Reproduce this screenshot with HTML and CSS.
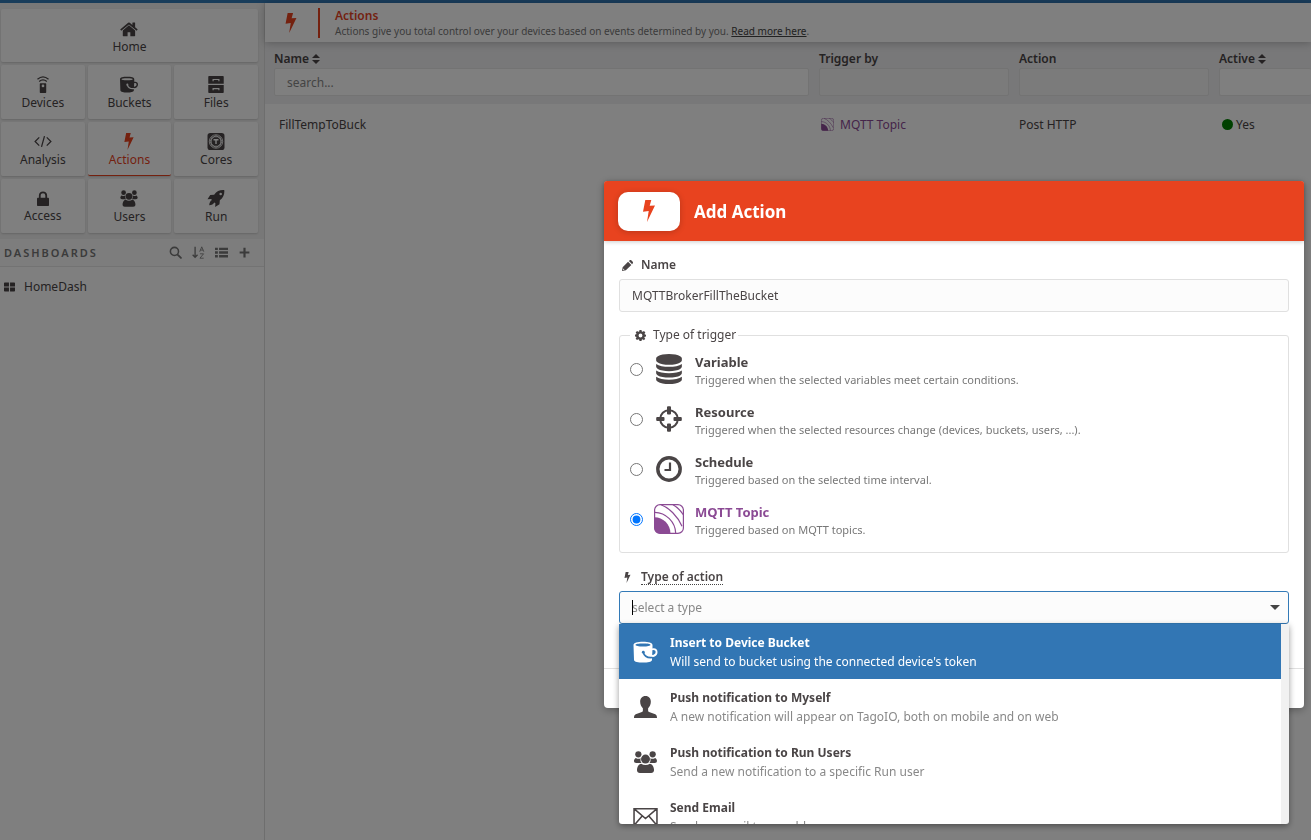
FILE: index.html
```html
<!DOCTYPE html>
<html lang="en">
<head>
<meta charset="utf-8">
<title>Add Action</title>
<link rel="stylesheet" href="styles.css">
</head>
<body>
<svg class="sprite" aria-hidden="true">
  <symbol id="bolt" viewBox="0 0 12 22"><path d="M2.3 0h6L6.7 5.8 12 5.400 4 22 5.700 11 0 11.800z"/></symbol>
  <symbol id="home" viewBox="60 200 1680 1400"><path d="M1472 992v480q0 26-19 45t-45 19h-384v-384H768v384H384q-26 0-45-19t-19-45V992q0-1 .5-3t.5-3l575-474 575 474q1 2 1 6zm223-69l-62 74q-8 9-21 11h-3q-13 0-21-7L896 424 204 1001q-12 8-24 7-13-2-21-11l-62-74q-8-10-7-23.500t11-21.500l719-599q32-26 76-26t76 26l244 204v-195q0-14 9-23t23-9h192q14 0 23 9t9 23v408l219 182q10 8 11 21.500t-7 23.500z"/></symbol>
  <symbol id="device" viewBox="0 0 20 20"><path d="M7 8.500h6a.8.8 0 0 1 .8.8v9.900a.8.8 0 0 1-.8.8H7a.8.8 0 0 1-.8-.8V9.300a.8.8 0 0 1 .8-.8zm3 1.600a1.600 1.600 0 1 0 0 3.200 1.600 1.600 0 0 0 0-3.200z" fill-rule="evenodd"/><path d="M3.500 3.800Q10-1.800 16.500 3.800M5.500 6.500Q10 2.600 14.500 6.500" fill="none" stroke="currentColor" stroke-width="1.500"/></symbol>
  <symbol id="bucket" viewBox="0 0 24 22"><path fill-rule="evenodd" d="M0 4C0 1.600 4 .8 9.500 .8S19 1.600 19 4v3.400c3-.6 5 1 5 3.500 0 3.200-2.400 5-5.400 5l-.1 3c-.5 1.900-4 2.700-9 2.700S1 20.800.5 18.900zM2 3.900c0 .9 3 1.500 7.500 1.500S17 4.800 17 3.900s-3-1.400-7.500-1.400S2 3 2 3.900zM18.900 9.200l-.2 4.700c2 0 3.400-1.200 3.400-2.900 0-1.400-1.300-2.200-3.200-1.800z"/><path class="cut" d="M9.800 11.500c1 3.600 4 5.600 9.200 5" fill="none" stroke-width="1.700"/><circle class="cut-fill" cx="9.800" cy="11.200" r="1.400"/></symbol>
  <symbol id="files" viewBox="0 0 20 22"><path fill-rule="evenodd" d="M1 0h18a1 1 0 0 1 1 1v9H0V1a1 1 0 0 1 1-1zm4.500 3.800v3H7v-1.500h6v1.500h1.500v-3zM0 11.500h20V21a1 1 0 0 1-1 1H1a1 1 0 0 1-1-1zm5.500 4v3H7V17h6v1.500h1.500v-3z"/></symbol>
  <symbol id="code" viewBox="0 0 24 16"><path d="M7 2.500 1.500 8 7 13.500M17 2.500 22.500 8 17 13.500M14 .8 10 15.200" fill="none" stroke="currentColor" stroke-width="1.700"/></symbol>
  <symbol id="core" viewBox="0 0 24 24"><rect width="24" height="24" rx="4"/><g class="cut" fill="none" stroke-width="1.100"><circle cx="12" cy="12" r="9.500"/><rect x="5.300" y="5.300" width="13.400" height="13.400" rx="3.500"/><rect x="5.300" y="5.300" width="13.400" height="13.400" rx="3.500" transform="rotate(45 12 12)"/><path d="M8.500 9.500h7M12 9.500v6" stroke-width="2"/></g></symbol>
  <symbol id="lock" viewBox="0 0 16 20"><path d="M1 9h14a1 1 0 0 1 1 1v9a1 1 0 0 1-1 1H1a1 1 0 0 1-1-1v-9a1 1 0 0 1 1-1z"/><path d="M3.700 9.500V6a4.300 4.300 0 0 1 8.600 0v3.500" fill="none" stroke="currentColor" stroke-width="2.400"/></symbol>
  <symbol id="users" viewBox="0 0 26 24"><circle cx="5.200" cy="3.600" r="3.400"/><circle cx="20.800" cy="3.600" r="3.400"/><path d="M2.500 7.500c1.800 1.200 3.800 1.200 5.300.3-.8 2.600 0 4.200 1 5.200H3C-.5 13 0 8.500 2.500 7.500zM23.500 7.500c-1.800 1.200-3.800 1.200-5.300.3.800 2.600 0 4.200-1 5.200H23c3.500 0 3-4.500.5-5.500z"/><circle cx="13" cy="8.800" r="4.900"/><path d="M8.200 13.800c3 2.100 6.600 2.100 9.600 0 3 .6 4.500 3.600 4.500 7 0 2.200-1.300 3.200-3.200 3.200H6.900c-1.900 0-3.200-1-3.200-3.200 0-3.400 1.500-6.400 4.500-7z"/></symbol>
  <symbol id="rocket" viewBox="0 0 20 20"><path fill-rule="evenodd" d="M19.800.2C14.500-.2 11 1.500 7.800 5.500L3.200 5.900 0 11l4.300-.4.900 1.300c-1.800.8-3 3.300-3.200 6.100 2.800-.2 5.200-1.300 6-3.200l1.300.9L9 20l5.100-3.200.4-4.600c4-3.200 5.600-6.700 5.300-12zM15.500 3.200a1.500 1.500 0 1 1 0 3 1.500 1.500 0 0 1 0-3z"/></symbol>
  <symbol id="search" viewBox="0 0 16 16"><circle cx="6.700" cy="6.700" r="5" fill="none" stroke="currentColor" stroke-width="1.900"/><path d="m10.500 10.500 4.200 4.200" stroke="currentColor" stroke-width="2.200" stroke-linecap="round"/></symbol>
  <symbol id="sort-az" viewBox="0 0 16 16"><path d="M3.800 1v13M.8 10.700l3 3.300 3-3.300" fill="none" stroke="currentColor" stroke-width="1.600"/><path d="m9.500 7 2.500-6 2.500 6M10.300 5h3.400M9.800 9.600h4.400l-4.400 5.400h4.600" fill="none" stroke="currentColor" stroke-width="1"/></symbol>
  <symbol id="list" viewBox="0 0 16 14"><path d="M0 1h3.500v3H0zM5 1h11v3H5zM0 5.500h3.500v3H0zM5 5.500h11v3H5zM0 10h3.500v3H0zM5 10h11v3H5z"/></symbol>
  <symbol id="plus" viewBox="0 0 12 12"><path d="M5 1.500h2V5h3.500v2H7v3.500H5V7H1.500V5H5z"/></symbol>
  <symbol id="tiles" viewBox="0 0 12 10"><path d="M.8 0h4.600v4.500H0V.8A.8.8 0 0 1 .8 0zM6.600 0h4.600a.8.8 0 0 1 .8.800v3.700H6.600zM0 5.500h5.400V10H.8a.8.8 0 0 1-.8-.8zM6.600 5.500H12v3.700a.8.8 0 0 1-.8.800H6.600z"/></symbol>
  <symbol id="sort" viewBox="0 0 8 10"><path d="M4 0 8 4H0zM4 10 8 6H0z"/></symbol>
  <symbol id="pencil" viewBox="0 0 12 12"><path fill-rule="evenodd" d="M0 12 .7 7.800 6.600 1.800l3.600 3.600-6 5.900zM7.500 1 8.500 .2c.5-.4 1.200-.3 1.600.1l1.600 1.600c.4.400.5 1.100.1 1.600l-.8 1zM1.500 9.300l-.3 1.500 1.500-.3z"/></symbol>
  <symbol id="gear" viewBox="0 0 12 12"><path fill-rule="evenodd" d="M4.900 0h2.200l.3 1.600 1 .4L9.800 1.100l1.500 1.500-.9 1.400.4 1 1.200.2v1.900l-1.400.3-.4 1 1 1.200-1.500 1.500-1.300-.9-1 .4L7.100 12H4.900l-.3-1.500-1-.4-1.400.9L.7 9.500l.9-1.200-.4-1L0 7V5l1.200-.2.4-1L.7 2.600l1.500-1.500 1.400.900 1-.4zM6 3.900a2.100 2.100 0 1 0 0 4.200 2.100 2.100 0 0 0 0-4.200z"/></symbol>
  <symbol id="database" viewBox="128 0 1536 1792"><path d="M896 768q237 0 443-43t325-127v170q0 69-103 128t-280 93.500-385 34.500-385-34.500-280-93.500-103-128v-170q119 84 325 127t443 43zm0 768q237 0 443-43t325-127v170q0 69-103 128t-280 93.500-385 34.500-385-34.500-280-93.500-103-128v-170q119 84 325 127t443 43zm0-384q237 0 443-43t325-127v170q0 69-103 128t-280 93.500-385 34.500-385-34.500-280-93.500-103-128v-170q119 84 325 127t443 43zm0-1152q208 0 385 34.500t280 93.500 103 128v128q0 69-103 128t-280 93.500-385 34.500-385-34.500-280-93.500-103-128V256q0-69 103-128t280-93.500 385-34.500z"/></symbol>
  <symbol id="crosshair" viewBox="-2 -2 30 30"><circle cx="13" cy="13" r="8.800" fill="none" stroke="currentColor" stroke-width="2"/><path d="M11 1.200A1 1 0 0 1 12 .2h2a1 1 0 0 1 1 1v6.300a1 1 0 0 1-1 1h-2a1 1 0 0 1-1-1zM11 18.500a1 1 0 0 1 1-1h2a1 1 0 0 1 1 1v6.300a1 1 0 0 1-1 1h-2a1 1 0 0 1-1-1zM1.200 11h6.300a1 1 0 0 1 1 1v2a1 1 0 0 1-1 1H1.200a1 1 0 0 1-1-1v-2a1 1 0 0 1 1-1zM18.500 11h6.300a1 1 0 0 1 1 1v2a1 1 0 0 1-1 1h-6.300a1 1 0 0 1-1-1v-2a1 1 0 0 1 1-1z"/></symbol>
  <symbol id="clock" viewBox="-2 -2 30 30"><g fill="none" stroke="currentColor"><circle cx="13" cy="13" r="11.200" stroke-width="3.400"/><path d="M14 6.500V14H8.500" stroke-width="2.200"/></g></symbol>
  <symbol id="mqtt" viewBox="0 0 30 30"><rect x=".6" y=".6" width="28.800" height="28.800" rx="5.500" fill="none" stroke="currentColor" stroke-width="1.200"/><path d="M.5 13.300C9 13.500 16.300 20 16.500 29.500H5.500a5 5 0 0 1-5-5z"/><path d="M.7 8.300C12 8.500 21.400 18 21.700 29.300M7 .8c8 3 16.500 11 21 21.500M19 .8c4 2.200 7.500 5.500 10.300 10" fill="none" stroke="currentColor" stroke-width="1.200"/></symbol>
  <symbol id="person" viewBox="0 0 22 21"><path d="M11 0c3.300 0 5.100 2.300 5.100 5.600 0 2.700-1.200 5-2.600 6.200v2.300c0 .8.700 1.200 1.600 1.500l4.600 1.600c1.600.6 2.300 1.500 2.300 3.800H0c0-2.300.7-3.200 2.300-3.800l4.600-1.600c.9-.3 1.600-.7 1.600-1.500v-2.300C7.100 10.600 5.900 8.300 5.900 5.600 5.900 2.300 7.700 0 11 0z"/></symbol>
  <symbol id="mail" viewBox="0 0 24 18"><path d="M1 1h22v16H1zM1.500 1.500 12 10.500l10.500-9M1.500 16.500 8.800 8M22.500 16.500 15.200 8" fill="none" stroke="currentColor" stroke-width="1.500"/></symbol>
</svg>

<div class="app">
  <aside class="sidebar">
    <nav class="tiles">
      <a class="tile tile-wide" href="#"><svg class="icon icon-short"><use href="#home"/></svg>Home</a>
      <a class="tile" href="#"><svg class="icon"><use href="#device"/></svg>Devices</a>
      <a class="tile" href="#"><svg class="icon"><use href="#bucket"/></svg>Buckets</a>
      <a class="tile" href="#"><svg class="icon"><use href="#files"/></svg>Files</a>
      <a class="tile" href="#"><svg class="icon"><use href="#code"/></svg>Analysis</a>
      <a class="tile tile-active" href="#"><svg class="icon"><use href="#bolt"/></svg>Actions</a>
      <a class="tile" href="#"><svg class="icon"><use href="#core"/></svg>Cores</a>
      <a class="tile" href="#"><svg class="icon icon-short"><use href="#lock"/></svg>Access</a>
      <a class="tile" href="#"><svg class="icon"><use href="#users"/></svg>Users</a>
      <a class="tile" href="#"><svg class="icon"><use href="#rocket"/></svg>Run</a>
    </nav>
    <div class="dash-head">
      <h2>DASHBOARDS</h2>
      <button type="button" aria-label="Search"><svg><use href="#search"/></svg></button>
      <button type="button" aria-label="Sort"><svg><use href="#sort-az"/></svg></button>
      <button type="button" aria-label="List"><svg><use href="#list"/></svg></button>
      <button type="button" aria-label="Add"><svg><use href="#plus"/></svg></button>
    </div>
    <div class="dash-list">
      <a href="#"><svg><use href="#tiles"/></svg>HomeDash</a>
    </div>
  </aside>

  <main class="main">
    <header class="page-head">
      <svg><use href="#bolt"/></svg>
      <div class="page-title">
        <h1>Actions</h1>
        <p>Actions give you total control over your devices based on events determined by you. <a href="#">Read more here</a>.</p>
      </div>
    </header>
    <table class="grid">
      <colgroup><col><col class="col-mid"><col class="col-mid"><col class="col-end"></colgroup>
      <thead>
        <tr>
          <th>Name <svg><use href="#sort"/></svg><input type="text" placeholder="search..." aria-label="Search by name"></th>
          <th>Trigger by<input type="text" aria-label="Filter by trigger" disabled></th>
          <th>Action<input type="text" aria-label="Filter by action" disabled></th>
          <th>Active <svg><use href="#sort"/></svg><input type="text" aria-label="Filter by active"></th>
        </tr>
      </thead>
      <tbody>
        <tr>
          <td>FillTempToBuck</td>
          <td class="mqtt"><svg><use href="#mqtt"/></svg>MQTT Topic</td>
          <td>Post HTTP</td>
          <td><span class="dot"></span>Yes</td>
        </tr>
      </tbody>
    </table>
  </main>
</div>

<div class="backdrop">
  <form class="modal" role="dialog" aria-labelledby="modal-title">
    <header class="modal-head">
      <span class="badge"><svg><use href="#bolt"/></svg></span>
      <h2 id="modal-title">Add Action</h2>
    </header>
    <div class="modal-body">
      <label class="field-label" for="name"><svg><use href="#pencil"/></svg>Name</label>
      <input class="field" id="name" type="text" value="MQTTBrokerFillTheBucket">

      <fieldset class="triggers">
        <legend><svg><use href="#gear"/></svg>Type of trigger</legend>
        <label class="trigger"><input type="radio" name="trigger"><svg><use href="#database"/></svg>
          <span><b>Variable</b>Triggered when the selected variables meet certain conditions.</span></label>
        <label class="trigger"><input type="radio" name="trigger"><svg><use href="#crosshair"/></svg>
          <span><b>Resource</b>Triggered when the selected resources change (devices, buckets, users, ...).</span></label>
        <label class="trigger"><input type="radio" name="trigger"><svg><use href="#clock"/></svg>
          <span><b>Schedule</b>Triggered based on the selected time interval.</span></label>
        <label class="trigger trigger-mqtt"><input type="radio" name="trigger" checked><svg><use href="#mqtt"/></svg>
          <span><b>MQTT Topic</b>Triggered based on MQTT topics.</span></label>
      </fieldset>

      <label class="field-label" for="action"><svg><use href="#bolt"/></svg><span class="hint">Type of action</span></label>
      <div class="combo">
        <input class="field" id="action" type="text" role="combobox" aria-expanded="true" aria-controls="options" placeholder="select a type">
        <span class="caret"></span>
        <span class="arrow"></span>
        <ul class="options" id="options" role="listbox">
          <li class="option option-on" role="option" aria-selected="true"><svg><use href="#bucket"/></svg><span><b>Insert to Device Bucket</b>Will send to bucket using the connected device's token</span></li>
          <li class="option" role="option"><svg><use href="#person"/></svg><span><b>Push notification to Myself</b>A new notification will appear on TagoIO, both on mobile and on web</span></li>
          <li class="option" role="option"><svg><use href="#users"/></svg><span><b>Push notification to Run Users</b>Send a new notification to a specific Run user</span></li>
          <li class="option" role="option"><svg><use href="#mail"/></svg><span><b>Send Email</b>Send an email to an address</span></li>
        </ul>
      </div>
    </div>
    <footer class="modal-foot"></footer>
  </form>
</div>
</body>
</html>
```
FILE: styles.css
```css
* { box-sizing: border-box; }

body {
  margin: 0;
  font: 12px/16px "Noto Sans", "Open Sans", sans-serif;
  color: #4a4546;
  background: #fff;
  overflow: hidden;
}

h1, h2, p, ul { margin: 0; padding: 0; }
a { color: inherit; text-decoration: none; }
svg { fill: currentColor; flex: none; }
button { padding: 0; border: 0; background: none; color: inherit; display: flex; }
input { font: inherit; color: inherit; }
.sprite { position: absolute; width: 0; height: 0; }
.cut { stroke: var(--back, #fff); }
.cut-fill { fill: var(--back, #fff); }

.app {
  display: flex;
  min-height: 100vh;
  border-top: 3px solid #337ab7;
}

/* Sidebar */
.sidebar {
  width: 265px;
  flex: none;
  display: flex;
  flex-direction: column;
  background: #f0f0f0;
  border-right: 1px solid #ddd;
}

.tiles {
  display: grid;
  grid-template-columns: repeat(3, 1fr);
  gap: 3px;
  padding: 6px 6px 6px 1px;
}

.tile {
  height: 54px;
  display: flex;
  flex-direction: column;
  align-items: center;
  justify-content: center;
  gap: 2px;
  padding-top: 3px;
  background: #fff;
  border-radius: 2px;
  border-bottom: 1px solid #fff;
  box-shadow: 0 1px 2px rgba(0, 0, 0, .15);
}
.tile-wide { grid-column: 1 / -1; height: 53px; padding-top: 6px; }
.tile-active { color: #e8431f; border-bottom-color: #e8431f; }
.icon { width: 18px; height: 17px; }
.icon-short { height: 15px; }

.dash-head {
  display: flex;
  align-items: center;
  gap: 10px;
  height: 28px;
  padding: 0 13px 0 4px;
  background: #fafafa;
  color: #777;
  border-bottom: 1px solid #e6e6e6;
}
.dash-head h2 { flex: 1; font-size: 11px; font-weight: 600; letter-spacing: 2px; }
.dash-head svg { width: 13px; height: 13px; }

.dash-list { flex: 1; padding: 9px 4px; background: #fff; }
.dash-list a { display: flex; align-items: center; gap: 9px; height: 22px; }
.dash-list svg { width: 11px; height: 10px; }

/* Page */
.main { flex: 1; min-width: 0; }

.page-head {
  position: relative;
  display: flex;
  align-items: center;
  height: 39px;
  padding-left: 20px;
  box-shadow: 0 1px 8px rgba(0, 0, 0, .25);
}
.page-head svg { width: 12px; height: 20px; color: #e8431f; }
.page-title {
  margin-left: 21px;
  padding-left: 15px;
  height: 30px;
  border-left: 2px solid #e8431f;
  font-size: 10px;
  line-height: 14px;
  color: #777;
}
.page-title h1 { font-size: 12px; line-height: 16px; font-weight: 600; color: #e8431f; }
.page-title a { color: #444; text-decoration: underline; }

.grid { width: 100%; table-layout: fixed; border-collapse: collapse; }
.col-mid { width: 200px; }
.col-end { width: 97px; }
.grid th {
  height: 62px;
  padding: 9px 5px 8px;
  text-align: left;
  vertical-align: top;
  font-weight: 600;
  background: #f0f0f2;
}
.grid th:first-child { padding-left: 9px; }
.grid th:last-child { padding-right: 0; }
.grid th svg { width: 8px; height: 10px; vertical-align: -1px; }
.grid th input {
  display: block;
  width: 100%;
  height: 28px;
  margin-top: 1px;
  padding: 0 12px;
  border: 1px solid #e6e6e6;
  border-radius: 2px;
  background: #fff;
  font-weight: 400;
}
.grid th input:disabled { background: #f7f7f7; }
.grid th:last-child input { border-right: 0; }
.grid td { height: 41px; padding: 0 5px; }
.grid td:first-child { padding-left: 14px; }
.grid td svg { width: 13px; height: 13px; margin: 0 6px 0 2px; vertical-align: -2px; }
.grid .mqtt { color: #8b4a94; }
.dot {
  display: inline-block;
  width: 11px;
  height: 11px;
  margin: 0 3px;
  border-radius: 50%;
  background: green;
  vertical-align: -1px;
}

/* Modal */
.backdrop {
  position: fixed;
  inset: 0;
  display: flex;
  justify-content: flex-end;
  align-items: flex-start;
  padding: 181px 7px 0;
  background: rgba(0, 0, 0, .5);
}
.modal {
  width: 700px;
  max-width: 100%;
  border-radius: 4px;
  background: #fff;
  box-shadow: 0 2px 8px rgba(0, 0, 0, .3);
}
.modal-head {
  display: flex;
  align-items: center;
  gap: 14px;
  height: 60px;
  padding: 0 14px;
  border-radius: 3px 3px 0 0;
  background: #e8431f;
  color: #fff;
  box-shadow: 0 1px 4px rgba(0, 0, 0, .2);
}
.modal-head h2 { padding-top: 2px; font-size: 17px; line-height: 24px; font-weight: 700; }
.badge {
  display: grid;
  place-items: center;
  width: 62px;
  height: 39px;
  border-radius: 10px;
  background: #fff;
  color: #e8431f;
  box-shadow: 0 1px 6px rgba(0, 0, 0, .2);
}
.badge svg { width: 12px; height: 22px; }

.modal-body { padding: 14px 15px 44px; }
.field-label {
  display: flex;
  align-items: center;
  gap: 8px;
  height: 20px;
  margin-bottom: 4px;
  padding-left: 3px;
  font-weight: 600;
}
.field-label svg { width: 11px; height: 11px; }
.hint { border-bottom: 1px dotted #444; line-height: 15px; }
.field {
  display: block;
  width: 100%;
  height: 33px;
  padding: 0 12px;
  border: 1px solid #e0e0e0;
  border-radius: 3px;
  background: #fcfcfc;
  outline: 0;
}
input::placeholder { color: #888; opacity: 1; }

.triggers {
  margin: 15px 0 14px;
  padding: 1px 10px 8px;
  border: 1px solid #e0e0e0;
  border-radius: 3px;
}
.triggers legend { display: flex; align-items: center; gap: 7px; padding: 0 2px 0 5px; }
.triggers legend svg { width: 11px; height: 11px; }
.trigger { display: flex; align-items: center; height: 50px; font-size: 11px; color: #777; }
.trigger input { width: 13px; height: 13px; margin: 0 11px 0 0; }
.trigger svg { width: 30px; height: 30px; margin-right: 11px; color: #4a4546; }
.trigger span { padding-top: 3px; line-height: 18px; }
.trigger b { display: block; font-size: 13px; color: #4a4546; }
.trigger-mqtt svg, .trigger-mqtt b { color: #8b4a94; }

.combo { position: relative; }
.combo .field { border-color: #337ab7; }
.caret { position: absolute; left: 13px; top: 9px; width: 1px; height: 15px; background: #000; }
.arrow {
  position: absolute;
  right: 9px;
  top: 14px;
  border: 5px solid transparent;
  border-top-color: #444;
  border-bottom: 0;
}
.options {
  position: absolute;
  top: 100%;
  left: 0;
  right: 0;
  height: 200px;
  overflow: hidden;
  list-style: none;
  background: #fff;
  border-right: 8px solid #f1f1f1;
  border-radius: 0 0 3px 3px;
  box-shadow: 0 2px 6px rgba(0, 0, 0, .4);
}
.option { display: flex; align-items: center; gap: 12px; height: 55px; padding: 0 14px; color: #888; }
.option svg { width: 25px; height: 22px; color: #4a4546; }
.option span { line-height: 19px; }
.option b { display: block; color: #4a4546; }
.option-on { --back: #3276b4; background: #3276b4; color: #fff; }
.option-on svg, .option-on b { color: #fff; }

.modal-foot { height: 40px; border-top: 1px solid #e0e0e0; }
```
